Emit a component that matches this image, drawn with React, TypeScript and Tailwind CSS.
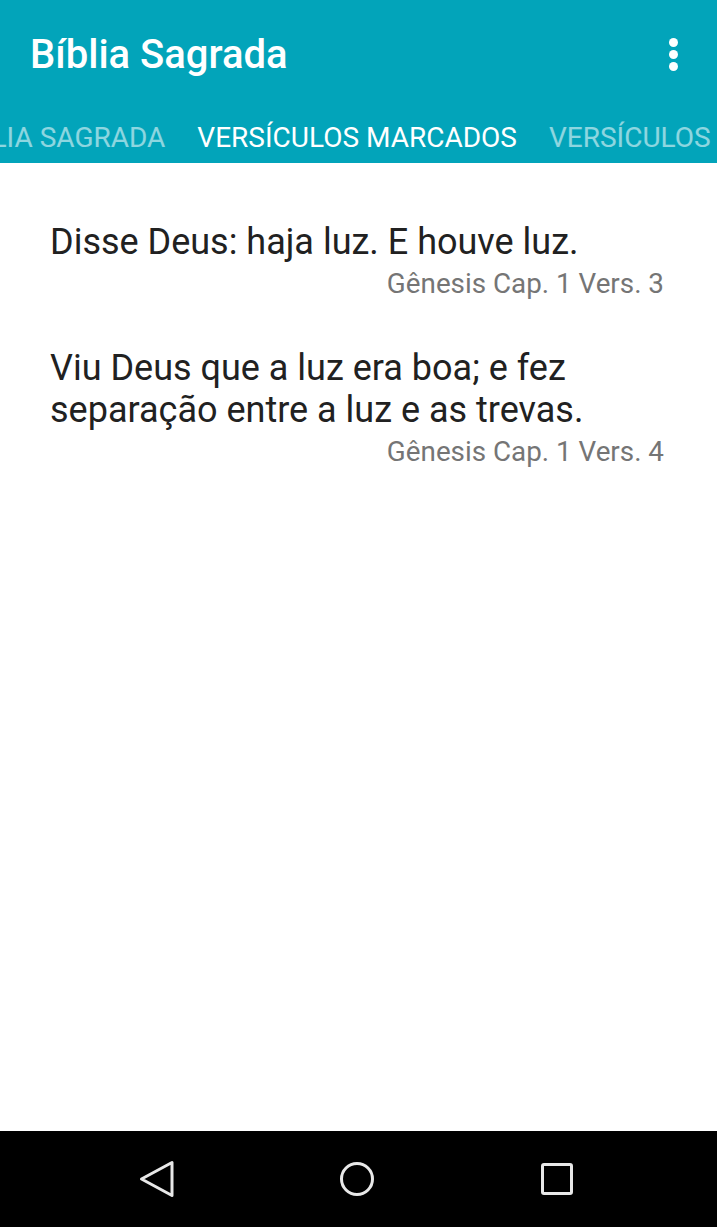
import React from "react";

export default function App() {
  const verses = [
    { text: "Disse Deus: haja luz. E houve luz.", ref: "Gênesis Cap. 1 Vers. 3" },
    { text: "Viu Deus que a luz era boa; e fez separação entre a luz e as trevas.", ref: "Gênesis Cap. 1 Vers. 4" },
  ];
  return (
    <div className="w-[717px] h-[1227px] flex flex-col bg-white overflow-hidden" style={{ fontFamily: "Roboto, 'Noto Sans', sans-serif" }}>
      <div className="bg-[#02a4ba] shrink-0">
        <div className="h-[110px] flex items-center justify-between pl-[30px] pr-[39px]">
          <span className="text-white text-[40px] font-medium leading-none">Bíblia Sagrada</span>
          <div className="flex flex-col gap-[3px] mt-[-2px]">
            <span className="w-[9px] h-[9px] rounded-full bg-white" />
            <span className="w-[9px] h-[9px] rounded-full bg-white" />
            <span className="w-[9px] h-[9px] rounded-full bg-white" />
          </div>
        </div>
        <div className="h-[53px] flex items-center whitespace-nowrap overflow-hidden">
          <div className="flex items-center gap-[32px] ml-[-51px] mt-[2px]">
            <span className="text-[28px] text-white/55">BÍBLIA SAGRADA</span>
            <span className="text-[28px] text-white">VERSÍCULOS MARCADOS</span>
            <span className="text-[28px] text-white/55">VERSÍCULOS</span>
          </div>
        </div>
      </div>
      <div className="flex-1 pl-[50px] pr-[53px] pt-[58px]">
        <div className="flex flex-col gap-[42px]">
          {verses.map((v, i) => (
            <div key={i} className="flex flex-col">
              <p className="text-[36px] leading-[42px] text-[#212121]">{v.text}</p>
              <p className="text-[27.8px] leading-[42px] text-[#757575] text-right">{v.ref}</p>
            </div>
          ))}
        </div>
      </div>
      <div className="h-[96px] bg-black shrink-0 flex items-center pl-[137px] gap-[160px]">
        <svg width="40" height="40" viewBox="0 0 40 40">
          <path d="M35 3.5 L35 36.5 L4.5 20 Z" fill="none" stroke="#e8e8e8" strokeWidth="3" strokeLinejoin="round" />
        </svg>
        <svg width="40" height="40" viewBox="0 0 40 40">
          <circle cx="20" cy="20" r="15.5" fill="none" stroke="#e8e8e8" strokeWidth="3" />
        </svg>
        <svg width="40" height="40" viewBox="0 0 40 40">
          <rect x="5.5" y="5.5" width="29" height="29" rx="1.5" fill="none" stroke="#e8e8e8" strokeWidth="3" />
        </svg>
      </div>
    </div>
  );
}
